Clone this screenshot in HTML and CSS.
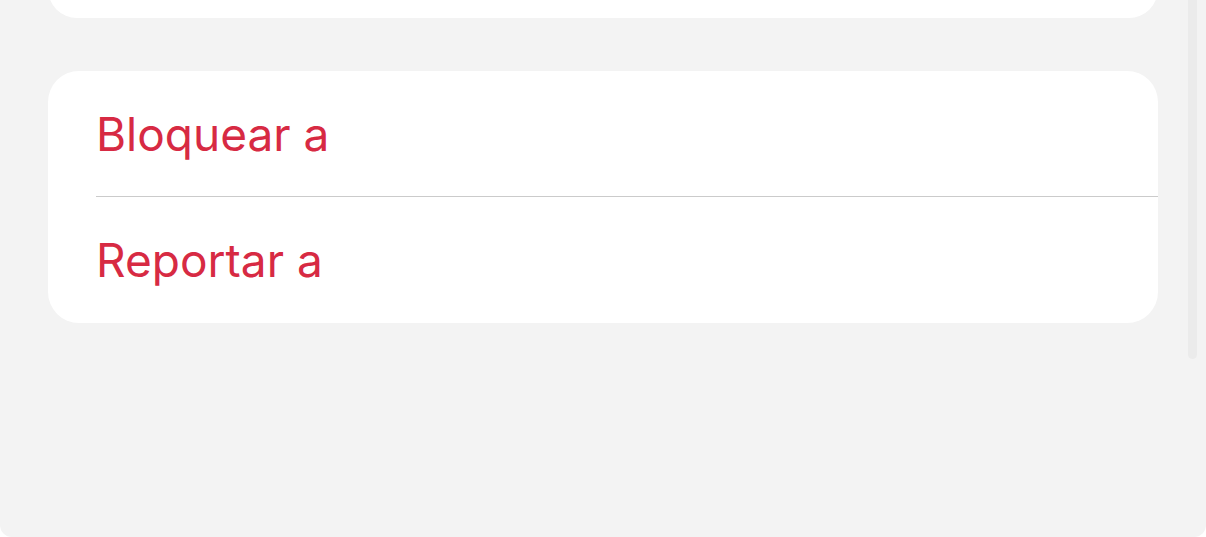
FILE: index.html
```html
<!DOCTYPE html>
<html lang="es">

<head>
    <meta charset="UTF-8">
    <meta name="viewport" content="width=device-width, initial-scale=1.0">
    <title>Opciones</title>
    <link rel="stylesheet" href="styles.css">
</head>

<body>
    <div class="pantalla">
        <div class="tarjeta tarjeta-arriba"></div>
        <div class="tarjeta">
            <div class="fila">Bloquear a</div>
            <div class="separador"></div>
            <div class="fila fila-ultima">Reportar a</div>
        </div>
        <div class="scroll"></div>
    </div>
</body>

</html>
```

FILE: styles.css
```css
body {
    margin: 0;
    background-color: #fff;
    font-family: Inter, "Noto Sans", sans-serif;
}

.pantalla {
    position: relative;
    height: 537px;
    background-color: #f3f3f3;
    border-radius: 0 0 12px 12px;
    padding: 0 48px;
    box-sizing: border-box;
    overflow: hidden;
}

.tarjeta {
    background-color: #fff;
    border-radius: 31px;
    margin-bottom: 53px;
}

.tarjeta-arriba {
    height: 58px;
    margin-top: -40px;
}

.fila {
    height: 125px;
    display: flex;
    align-items: center;
    padding-left: 48px;
    color: #d72a43;
    font-size: 46px;
}

.fila-ultima {
    height: 126px;
}

.separador {
    height: 1px;
    margin-left: 48px;
    background-color: #cbcbcb;
}

.scroll {
    position: absolute;
    top: 0;
    left: 1188px;
    width: 9px;
    height: 359px;
    background-color: #ebebeb;
    border-radius: 0 0 5px 5px;
}
```
